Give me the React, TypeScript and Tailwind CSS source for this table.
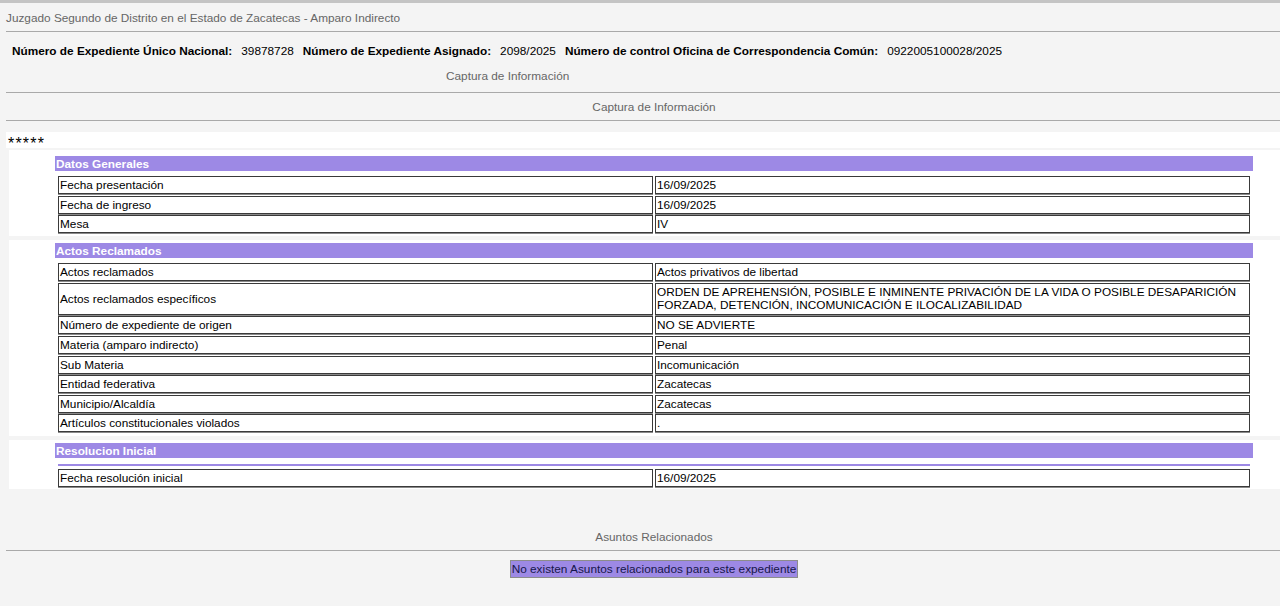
import React from "react";

type Row = { label: string; value: string; tall?: boolean };

const datos: Row[] = [
  { label: "Fecha presentación", value: "16/09/2025" },
  { label: "Fecha de ingreso", value: "16/09/2025" },
  { label: "Mesa", value: "IV" },
];

const actos: Row[] = [
  { label: "Actos reclamados", value: "Actos privativos de libertad" },
  {
    label: "Actos reclamados específicos",
    value:
      "ORDEN DE APREHENSIÓN, POSIBLE E INMINENTE PRIVACIÓN DE LA VIDA O POSIBLE DESAPARICIÓN FORZADA, DETENCIÓN, INCOMUNICACIÓN E ILOCALIZABILIDAD",
    tall: true,
  },
  { label: "Número de expediente de origen", value: "NO SE ADVIERTE" },
  { label: "Materia (amparo indirecto)", value: "Penal" },
  { label: "Sub Materia", value: "Incomunicación" },
  { label: "Entidad federativa", value: "Zacatecas" },
  { label: "Municipio/Alcaldía", value: "Zacatecas" },
  { label: "Artículos constitucionales violados", value: "." },
];

function Cell({ children, tall }: { children: React.ReactNode; tall?: boolean }) {
  return (
    <div
      className={`flex-1 flex items-center bg-white border border-[#3a3a3a] shadow-[0_1px_0_#8a8a8a] pl-[1px] pt-[1px] leading-[13px] text-black ${
        tall ? "h-[32px]" : "h-[18px]"
      }`}
    >
      <span>{children}</span>
    </div>
  );
}

function Rows({ rows }: { rows: Row[] }) {
  return (
    <div className="flex flex-col gap-[1.6px] mx-[3px]">
      {rows.map((r) => (
        <div key={r.label} className="flex gap-[2px]">
          <Cell tall={r.tall}>{r.label}</Cell>
          <Cell tall={r.tall}>{r.value}</Cell>
        </div>
      ))}
    </div>
  );
}

function Header({ title }: { title: string }) {
  return (
    <div className="h-[15px] bg-[#9d89e5] text-white font-bold leading-[16px] pl-[1px]">
      {title}
    </div>
  );
}

export default function App() {
  return (
    <div className="min-h-[606px] w-[1280px] bg-[#f4f4f4] font-['Liberation_Sans',Arial,sans-serif] text-[11.8px] overflow-hidden">
      <div className="h-[3px] bg-[#c4c4c4]" />
      <div className="pl-[6px] pt-[8px] pb-[6px] leading-[14px] text-[#666]">
        Juzgado Segundo de Distrito en el Estado de Zacatecas - Amparo Indirecto
      </div>
      <div className="ml-[6px] h-px bg-[#a9a9a9]" />
      <div className="pl-[12px] pt-[12px] leading-[14px] text-black flex">
        <span className="font-bold">Número de Expediente Único Nacional:</span>
        <span className="ml-[9px]">39878728</span>
        <span className="font-bold ml-[9px]">Número de Expediente Asignado:</span>
        <span className="ml-[9px]">2098/2025</span>
        <span className="font-bold ml-[9px]">Número de control Oficina de Correspondencia Común:</span>
        <span className="ml-[9px]">0922005100028/2025</span>
      </div>
      <div className="pl-[446px] pt-[11px] pb-[9px] leading-[14px] text-[#666]">
        Captura de Información
      </div>
      <div className="ml-[6px] h-px bg-[#a9a9a9]" />
      <div className="ml-[28px] text-center pt-[7px] pb-[6px] leading-[14px] text-[#666]">
        Captura de Información
      </div>
      <div className="ml-[6px] h-px bg-[#a9a9a9]" />

      <div className="mt-[11px] ml-[6px] h-[16px] bg-white pl-[2px] text-black text-[16px] leading-[16px] tracking-[1.2px]">
        <span className="relative top-[4px]">*****</span>
      </div>

      <div className="ml-[9px] mt-[2px] flex flex-col gap-[4px]">
        <section className="bg-white pl-[46px] pr-[27px] pt-[6px] pb-[3px]">
          <Header title="Datos Generales" />
          <div className="mt-[5px]">
            <Rows rows={datos} />
          </div>
        </section>
        <section className="bg-white pl-[46px] pr-[27px] pt-[3px] pb-[4px]">
          <Header title="Actos Reclamados" />
          <div className="mt-[5px]">
            <Rows rows={actos} />
          </div>
        </section>
        <section className="bg-white pl-[46px] pr-[27px] pt-[3px] pb-[2px]">
          <Header title="Resolucion Inicial" />
          <div className="mt-[6px] mx-[3px] h-[2px] bg-[#9d89e5]" />
          <div className="mt-[3px]">
            <Rows rows={[{ label: "Fecha resolución inicial", value: "16/09/2025" }]} />
          </div>
        </section>
      </div>

      <div className="ml-[28px] text-center mt-[41px] leading-[14px] text-[#666]">
        Asuntos Relacionados
      </div>
      <div className="ml-[6px] mt-[6px] h-px bg-[#a9a9a9]" />
      <div className="flex justify-center ml-[28px] mt-[9px]">
        <div className="h-[18px] px-[1px] bg-[#9d89e5] border border-[#8c8c8c] leading-[17px] text-[#16164a]">
          No existen Asuntos relacionados para este expediente
        </div>
      </div>
    </div>
  );
}
